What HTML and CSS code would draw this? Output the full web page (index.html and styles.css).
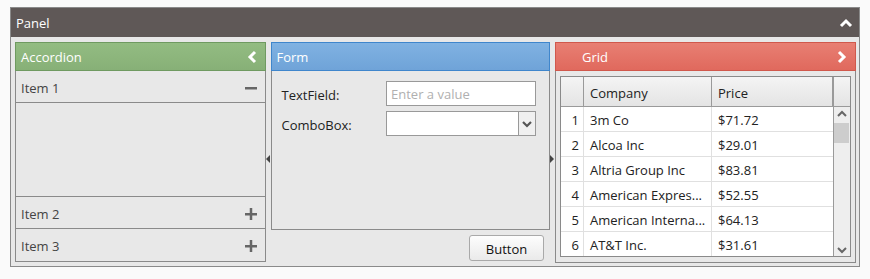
FILE: index.html
```html
<!DOCTYPE html>
<html>
<head>
    <title>Panel</title>
    <link rel="stylesheet" href="styles.css">
</head>
<body>
    <div class="panel">
        <div class="panel-header">
            <span>Panel</span>
            <svg class="tool" width="14" height="10" viewBox="0 0 14 10"><path d="M2 8 L7 3 L12 8" fill="none" stroke="#fff" stroke-width="3"/></svg>
        </div>
        <div class="panel-body">
            <div class="box accordion">
                <div class="box-header green">
                    <span>Accordion</span>
                    <svg class="tool" width="10" height="14" viewBox="0 0 10 14"><path d="M8 2 L3 7 L8 12" fill="none" stroke="#fff" stroke-width="3"/></svg>
                </div>
                <div class="acc-item">
                    <span>Item 1</span>
                    <svg width="12" height="12" viewBox="0 0 12 12"><rect x="0" y="5" width="12" height="2.5" fill="#666"/></svg>
                </div>
                <div class="acc-content"></div>
                <div class="acc-item">
                    <span>Item 2</span>
                    <svg width="12" height="12" viewBox="0 0 12 12"><rect x="0" y="5" width="12" height="2.5" fill="#666"/><rect x="4.75" y="0" width="2.5" height="12" fill="#666"/></svg>
                </div>
                <div class="acc-item last">
                    <span>Item 3</span>
                    <svg width="12" height="12" viewBox="0 0 12 12"><rect x="0" y="5" width="12" height="2.5" fill="#666"/><rect x="4.75" y="0" width="2.5" height="12" fill="#666"/></svg>
                </div>
            </div>
            <div class="splitter"><span class="arrow left"></span></div>
            <div class="form-col">
                <div class="box form">
                    <div class="box-header blue"><span>Form</span></div>
                    <div class="form-body">
                        <div class="field">
                            <label>TextField:</label>
                            <input type="text" placeholder="Enter a value">
                        </div>
                        <div class="field">
                            <label>ComboBox:</label>
                            <div class="combo">
                                <div class="combo-input"></div>
                                <div class="combo-btn">
                                    <svg width="10" height="8" viewBox="0 0 10 8"><path d="M1 2 L5 6 L9 2" fill="none" stroke="#555" stroke-width="2.2"/></svg>
                                </div>
                            </div>
                        </div>
                    </div>
                </div>
                <div class="form-footer">
                    <button>Button</button>
                </div>
            </div>
            <div class="splitter"><span class="arrow right"></span></div>
            <div class="box grid-box">
                <div class="box-header red">
                    <span class="grid-title">Grid</span>
                    <svg class="tool" width="10" height="14" viewBox="0 0 10 14"><path d="M2 2 L7 7 L2 12" fill="none" stroke="#fff" stroke-width="3"/></svg>
                </div>
                <div class="grid">
                    <div class="grid-main">
                        <div class="row head">
                            <div class="cell num"></div>
                            <div class="cell company">Company</div>
                            <div class="cell price">Price</div>
                        </div>
                        <div class="row"><div class="cell num">1</div><div class="cell company">3m Co</div><div class="cell price">$71.72</div></div>
                        <div class="row"><div class="cell num">2</div><div class="cell company">Alcoa Inc</div><div class="cell price">$29.01</div></div>
                        <div class="row"><div class="cell num">3</div><div class="cell company">Altria Group Inc</div><div class="cell price">$83.81</div></div>
                        <div class="row"><div class="cell num">4</div><div class="cell company">American Expres...</div><div class="cell price">$52.55</div></div>
                        <div class="row"><div class="cell num">5</div><div class="cell company">American Interna...</div><div class="cell price">$64.13</div></div>
                        <div class="row"><div class="cell num">6</div><div class="cell company">AT&amp;T Inc.</div><div class="cell price">$31.61</div></div>
                    </div>
                    <div class="scrollbar">
                        <div class="sb-corner"></div>
                        <div class="sb-track">
                            <svg width="10" height="8" viewBox="0 0 10 8"><path d="M1 6 L5 2 L9 6" fill="none" stroke="#666" stroke-width="2"/></svg>
                            <div class="sb-thumb"></div>
                            <div class="sb-space"></div>
                            <svg width="10" height="8" viewBox="0 0 10 8"><path d="M1 2 L5 6 L9 2" fill="none" stroke="#666" stroke-width="2"/></svg>
                        </div>
                    </div>
                </div>
            </div>
        </div>
    </div>
</body>
</html>
```

FILE: styles.css
```css
* {
    margin: 0;
    padding: 0;
    box-sizing: border-box;
}

body {
    background: #fafafa;
    font-family: "Open Sans", "Noto Sans", sans-serif;
    font-size: 13px;
    color: #333;
    padding: 7px 0 0 10px;
}

.panel {
    width: 850px;
    height: 260px;
    border: 1px solid #8a8a8a;
    background: #e8e8e8;
    display: flex;
    flex-direction: column;
}

.panel-header {
    height: 29px;
    background: #5f5857;
    color: #fff;
    display: flex;
    align-items: center;
    justify-content: space-between;
    padding: 1px 6px 0 5px;
    flex-shrink: 0;
}

.panel-body {
    flex: 1;
    display: flex;
    padding: 5px 3px 4px 4px;
}

.box {
    border: 1px solid #8a8a8a;
    background: #e8e8e8;
    display: flex;
    flex-direction: column;
}

.box-header {
    height: 29px;
    color: #fff;
    display: flex;
    align-items: center;
    justify-content: space-between;
    padding: 1px 8px 0 5px;
    flex-shrink: 0;
    margin: -1px -1px 0 -1px;
}

.green {
    background: linear-gradient(#93bc82, #87b077);
    border: 1px solid #6f9a61;
}

.blue {
    background: linear-gradient(#80b2e2, #6fa3d8);
    border: 1px solid #3f86cc;
}

.red {
    background: linear-gradient(#e87f73, #e0695d);
    border: 1px solid #d0584c;
}

.tool {
    display: block;
}

.accordion {
    width: 251px;
    height: 220px;
}

.acc-item {
    height: 32px;
    display: flex;
    align-items: center;
    justify-content: space-between;
    padding: 2px 8px 0 5px;
    border-bottom: 1px solid #8a8a8a;
    color: #444;
}

.acc-item.last {
    border-bottom: none;
}

.acc-content {
    height: 94px;
    border-bottom: 1px solid #8a8a8a;
}

.splitter {
    width: 5px;
    display: flex;
    align-items: center;
    justify-content: center;
}

.arrow {
    width: 0;
    height: 0;
    border-top: 4px solid transparent;
    border-bottom: 4px solid transparent;
    margin-top: 12px;
}

.arrow.left {
    border-right: 4px solid #444;
}

.arrow.right {
    border-left: 4px solid #444;
}

.form-col {
    width: 280px;
    display: flex;
    flex-direction: column;
}

.form {
    height: 188px;
}

.form-body {
    padding: 10px 13px 0 10px;
    display: flex;
    flex-direction: column;
    gap: 5px;
}

.field {
    display: flex;
    align-items: center;
    justify-content: space-between;
    height: 25px;
    color: #222;
}

.field label {
    padding-top: 2px;
}

.field input {
    width: 150px;
    height: 25px;
    border: 1px solid #999;
    background: #fff;
    font-family: inherit;
    font-size: 13px;
    padding: 1px 4px 0;
    outline: none;
}

.field input::placeholder {
    color: #b0b0b0;
}

.combo {
    width: 150px;
    height: 25px;
    border: 1px solid #999;
    display: flex;
    background: #fff;
}

.combo-input {
    flex: 1;
}

.combo-btn {
    width: 17px;
    border-left: 1px solid #999;
    background: #f0f0f0;
    display: flex;
    align-items: center;
    justify-content: center;
}

.form-footer {
    display: flex;
    justify-content: flex-end;
    padding: 5px 6px 0 0;
}

button {
    width: 75px;
    height: 26px;
    border: 1px solid #a9a9a9;
    border-radius: 3px;
    background: linear-gradient(#fdfdfd, #eaeaea);
    font-family: inherit;
    font-size: 13px;
    color: #111;
    padding-top: 1px;
}

.grid-box {
    width: 301px;
    height: 221px;
}

.grid-title {
    padding-left: 21px;
}

.grid {
    margin: 5px 4px 4px 4px;
    height: 181px;
    border: 1px solid #8a8a8a;
    display: flex;
    background: #fff;
    overflow: hidden;
}

.grid-main {
    flex: 1;
    overflow: hidden;
}

.row {
    display: flex;
    height: 25px;
    border-bottom: 1px solid #e0e0e0;
    color: #222;
}

.row.head {
    height: 30px;
    background: linear-gradient(#f4f4f4, #e4e4e4);
    border-bottom: 1px solid #9a9a9a;
}

.cell {
    display: flex;
    align-items: center;
    padding: 2px 6px 0;
    border-right: 1px solid #e0e0e0;
    white-space: nowrap;
    overflow: hidden;
}

.head .cell {
    border-right: 1px solid #9a9a9a;
}

.num {
    width: 23px;
    justify-content: flex-end;
    padding: 2px 4px 0;
    background: #fff;
}

.head .num {
    background: transparent;
}

.company {
    width: 128px;
}

.price {
    width: 121px;
    border-right: none;
}

.scrollbar {
    width: 17px;
    display: flex;
    flex-direction: column;
    border-left: 1px solid #9a9a9a;
}

.sb-corner {
    height: 30px;
    background: linear-gradient(#f4f4f4, #e4e4e4);
    border-bottom: 1px solid #9a9a9a;
    flex-shrink: 0;
}

.sb-track {
    flex: 1;
    background: #eeeeee;
    display: flex;
    flex-direction: column;
    align-items: center;
    padding: 3px 0 2px;
}

.sb-thumb {
    width: 15px;
    height: 20px;
    background: #cdcdcd;
    margin-top: 5px;
}

.sb-space {
    flex: 1;
}
```
